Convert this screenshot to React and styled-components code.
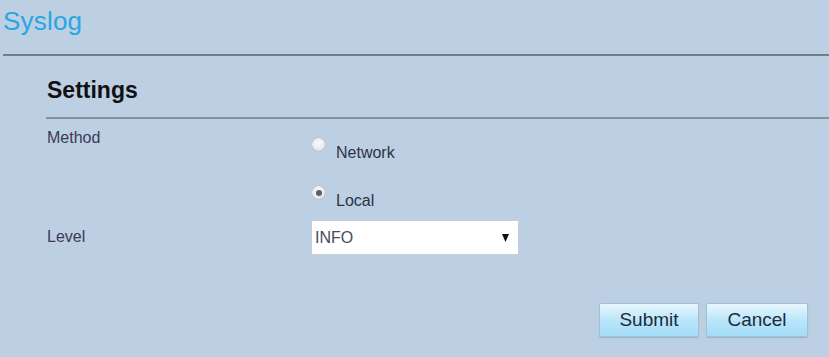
import React, { useState } from "react";
import styled, { createGlobalStyle } from "styled-components";

const GlobalStyle = createGlobalStyle`
  html, body {
    margin: 0;
    padding: 0;
    background-color: #bccfe3;
  }
  body {
    font-family: Arial, "Liberation Sans", Helvetica, sans-serif;
  }
`;

const Page = styled.div`
  width: 829px;
  height: 357px;
  background-color: #bccfe3;
  overflow: hidden;
`;

const Title = styled.h1`
  margin: 0 0 0 3px;
  padding: 6px 0 0 0;
  height: 56px;
  box-sizing: border-box;
  font-size: 26px;
  font-weight: normal;
  line-height: 30px;
  letter-spacing: 0.2px;
  color: #2aa6e4;
  border-bottom: 2px solid #717e8b;
`;

const Section = styled.div`
  padding: 21px 0 0 46px;
`;

const SectionHead = styled.h2`
  margin: 0;
  padding: 0 0 0 1px;
  height: 42px;
  box-sizing: border-box;
  font-size: 23px;
  font-weight: bold;
  line-height: 26px;
  color: #111;
  border-bottom: 2px solid #8491a0;
`;

const Row = styled.div`
  display: grid;
  grid-template-columns: 265px 1fr;
  padding-left: 1px;
  margin-top: ${(p) => p.gap || 0}px;
`;

const Label = styled.div`
  font-size: 16px;
  line-height: 18px;
  color: #3b3a55;
  padding-top: ${(p) => p.top}px;
`;

const Options = styled.div`
  display: flex;
  flex-direction: column;
  padding-top: 25px;
  gap: 30px;
`;

const RadioRow = styled.label`
  display: flex;
  align-items: flex-start;
  gap: 11px;
  font-size: 16px;
  line-height: 18px;
  color: #2c3344;
  cursor: pointer;
`;

const Dot = styled.span`
  width: 13px;
  height: 13px;
  flex: none;
  border-radius: 50%;
  margin-top: -6px;
  background: radial-gradient(circle at 50% 40%, #fbfbfb 0%, #ebebeb 55%, #cdd2d8 100%);
  box-shadow: 0 0 1px rgba(90, 100, 110, 0.5);
  display: flex;
  align-items: center;
  justify-content: center;
  &::after {
    content: "";
    width: 6px;
    height: 6px;
    border-radius: 50%;
    background: ${(p) => (p.checked ? "#5b5e63" : "transparent")};
  }
`;

const SelectBox = styled.div`
  width: 208px;
  height: 35px;
  box-sizing: border-box;
  margin-left: -1px;
  background: #fff;
  border: 1px solid #c9cfd6;
  display: flex;
  align-items: center;
  justify-content: space-between;
  padding: 0 9px 0 3px;
  font-size: 16px;
  color: #4a4a5a;
`;

const Actions = styled.div`
  display: flex;
  justify-content: flex-end;
  gap: 7px;
  padding: 48px 21px 0 0;
`;

const Button = styled.button`
  width: ${(p) => p.w}px;
  height: 34px;
  padding: 0;
  font-family: Arial, "Liberation Sans", sans-serif;
  font-size: 19px;
  color: #1e2a3a;
  border: 1px solid #9cc3da;
  border-radius: 2px;
  background: linear-gradient(#e8f7fe, #b7e4fa 55%, #a4dcf7);
  box-shadow: 0 1px 1px rgba(80, 100, 120, 0.3);
  cursor: pointer;
`;

function Caret() {
  return (
    <svg width="7" height="8" viewBox="0 0 7 8">
      <path d="M0 0 H7 L3.5 8 Z" fill="#111" />
    </svg>
  );
}

export default function App() {
  const [method, setMethod] = useState("local");

  return (
    <Page>
      <GlobalStyle />
      <Title>Syslog</Title>
      <Section>
        <SectionHead>Settings</SectionHead>
        <Row>
          <Label top={10}>Method</Label>
          <Options>
            <RadioRow onClick={() => setMethod("network")}>
              <Dot checked={method === "network"} />
              Network
            </RadioRow>
            <RadioRow onClick={() => setMethod("local")}>
              <Dot checked={method === "local"} />
              Local
            </RadioRow>
          </Options>
        </Row>
        <Row gap={10}>
          <Label top={8}>Level</Label>
          <SelectBox>
            INFO
            <Caret />
          </SelectBox>
        </Row>
      </Section>
      <Actions>
        <Button w={100}>Submit</Button>
        <Button w={102}>Cancel</Button>
      </Actions>
    </Page>
  );
}
